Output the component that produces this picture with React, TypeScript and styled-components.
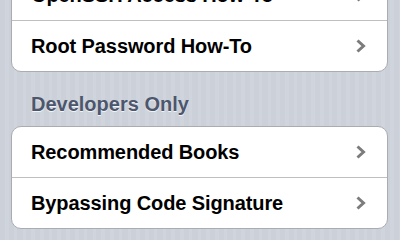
import React from 'react'
import styled, { createGlobalStyle } from 'styled-components'

const GlobalStyle = createGlobalStyle`
  html, body {
    margin: 0;
    padding: 0;
  }
  body {
    width: 400px;
    height: 240px;
    overflow: hidden;
    font-family: "Liberation Sans", Arial, sans-serif;
    background-color: #cdd2db;
    background-image: repeating-linear-gradient(
      to right,
      #cbd0d9 0px,
      #cbd0d9 5px,
      #d0d5dd 5px,
      #d0d5dd 8.75px
    );
  }
`

const Screen = styled.div`
  display: flex;
  flex-direction: column;
  padding: 0 12px 0 11px;
  margin-top: -31px;
`

const Group = styled.div`
  background: #fff;
  border: 1px solid #a9acb1;
  border-radius: 10px;
  overflow: hidden;
`

const Row = styled.div`
  height: 50px;
  display: flex;
  align-items: center;
  justify-content: space-between;
  padding: 0 20px 0 19px;
  & + & {
    border-top: 1px solid #bfbfc2;
  }
`

const Label = styled.span`
  font-size: 20px;
  font-weight: bold;
  color: #000;
  letter-spacing: -0.1px;
`

const Header = styled.div`
  padding: 21px 0 11px 20px;
  font-size: 20px;
  line-height: 22px;
  font-weight: bold;
  color: #4c566c;
  text-shadow: 0 1px 0 rgba(255, 255, 255, 0.8);
`

const Chevron = () => (
  <svg width="12" height="14" viewBox="0 0 12 14">
    <path d="M2.5 1.5 L8.5 7 L2.5 12.5" fill="none" stroke="#7c7c7c" strokeWidth="3" />
  </svg>
)

const sections = [
  { title: null, items: ['OpenSSH Access How-To', 'Root Password How-To'] },
  { title: 'Developers Only', items: ['Recommended Books', 'Bypassing Code Signature'] }
]

const App = () => (
  <>
    <GlobalStyle />
    <Screen>
      {sections.map((section) => (
        <React.Fragment key={section.items[0]}>
          {section.title && <Header>{section.title}</Header>}
          <Group>
            {section.items.map((item) => (
              <Row key={item}>
                <Label>{item}</Label>
                <Chevron />
              </Row>
            ))}
          </Group>
        </React.Fragment>
      ))}
    </Screen>
  </>
)

export default App
